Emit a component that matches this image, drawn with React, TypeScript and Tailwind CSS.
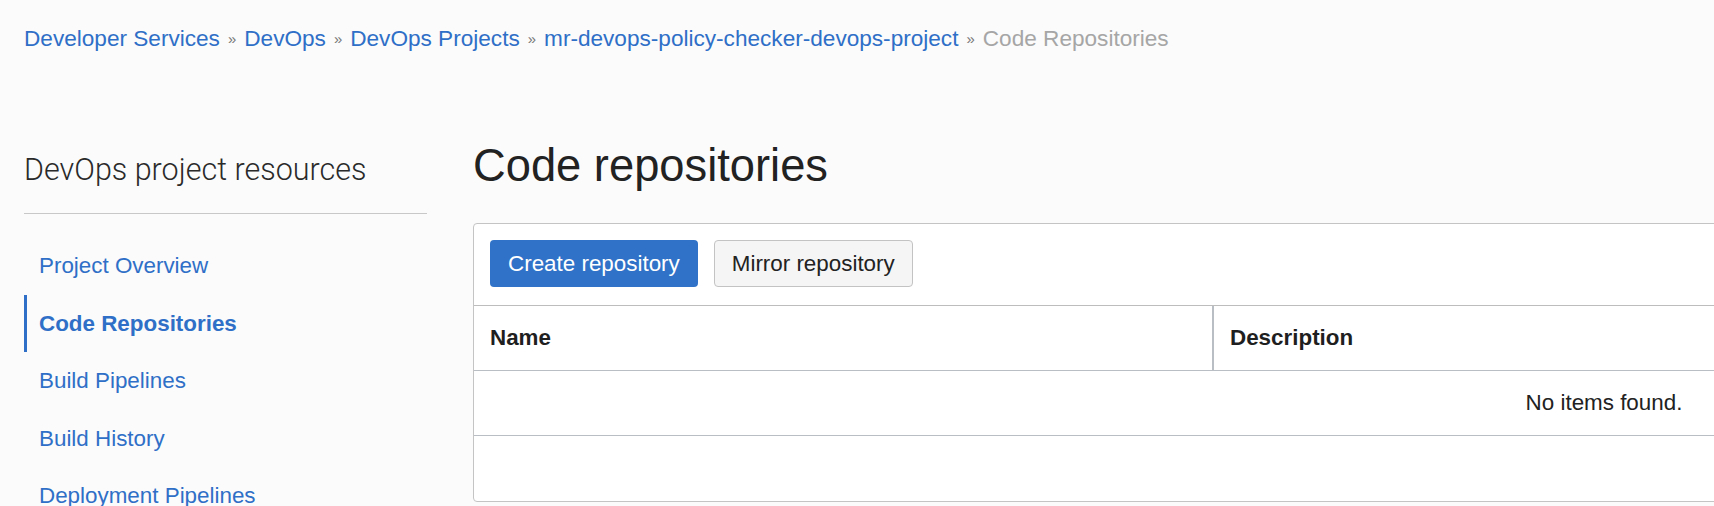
import React from "react";

const crumbs = [
  "Developer Services",
  "DevOps",
  "DevOps Projects",
  "mr-devops-policy-checker-devops-project",
];

const navItems = [
  { label: "Project Overview", active: false },
  { label: "Code Repositories", active: true },
  { label: "Build Pipelines", active: false },
  { label: "Build History", active: false },
  { label: "Deployment Pipelines", active: false },
];

export default function App() {
  return (
    <div className="h-[506px] w-full overflow-hidden bg-[#fbfbfb] font-['Liberation_Sans',Arial,sans-serif] text-[#222]">
      {/* Breadcrumb */}
      <nav className="flex items-center px-[24px] pt-[26px] text-[22.6px] leading-[26px]">
        {crumbs.map((c) => (
          <React.Fragment key={c}>
            <a href="#" className="text-[#2f6fc7]">
              {c}
            </a>
            <span className="mx-[8px] text-[15px] text-[#777]">»</span>
          </React.Fragment>
        ))}
        <span className="text-[#a6a6a6]">Code Repositories</span>
      </nav>

      <div className="mt-[88px] flex">
        {/* Sidebar */}
        <aside className="ml-[24px] w-[403px] shrink-0 pt-[12px]">
          <h2 className="border-b border-[#c8c8c8] pb-[25px] font-['Roboto',sans-serif] text-[30.5px] font-light leading-[36px] text-[#2a2a2a]">
            DevOps project resources
          </h2>
          <ul className="mt-[23px]">
            {navItems.map((item) => (
              <li
                key={item.label}
                className={
                  item.active
                    ? "border-l-[3px] border-[#2f6fc7] pl-[12px] text-[22.4px] leading-[57.5px] font-bold text-[#2f6fc7]"
                    : "pl-[15px] text-[22.4px] leading-[57.5px] text-[#2f6fc7]"
                }
              >
                {item.label}
              </li>
            ))}
          </ul>
        </aside>

        {/* Main */}
        <main className="ml-[46px] min-w-0 flex-1">
          <h1 className="text-[45.3px] leading-[52px] text-[#222]">Code repositories</h1>

          <div className="mt-[31px] w-[2262px] rounded-[4px] border border-[#c4c4c4] bg-white">
            <div className="flex gap-[16px] border-b border-[#bdbdbd] px-[16px] pt-[16px] pb-[18px]">
              <button className="h-[47px] rounded-[4px] bg-[#2f72c8] px-[18px] text-[22.4px] text-white">
                Create repository
              </button>
              <button className="h-[47px] rounded-[4px] border border-[#c3c3c3] bg-[#f5f5f5] px-[17px] text-[22.4px] text-[#222]">
                Mirror repository
              </button>
            </div>

            <div className="flex h-[65px] border-b border-[#b9bec4] text-[22.4px] font-bold text-[#1f1f1f]">
              <div className="flex w-[740px] items-center border-r-2 border-[#b9bec4] pl-[16px]">Name</div>
              <div className="flex flex-1 items-center pl-[16px]">Description</div>
            </div>

            <div className="flex h-[65px] items-center justify-center border-b border-[#b9bec4] text-[22.4px] text-[#222]">
              No items found.
            </div>

            <div className="h-[65px]"></div>
          </div>
        </main>
      </div>
    </div>
  );
}
